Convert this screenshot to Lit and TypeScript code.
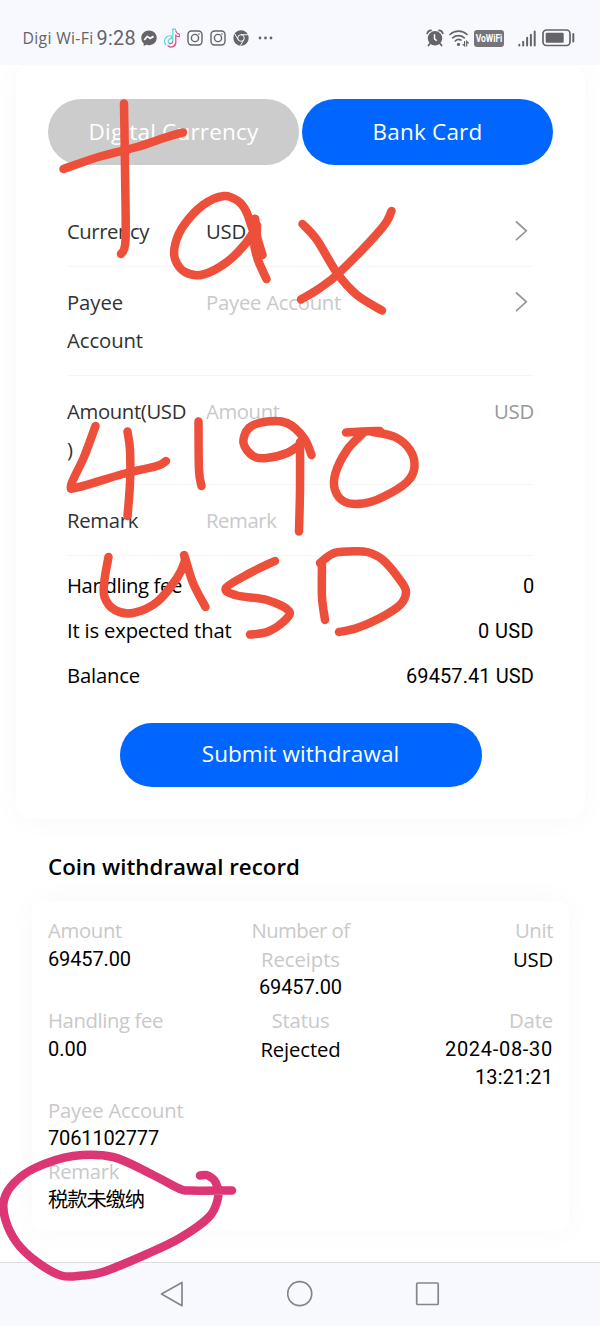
import { LitElement, html, css, svg } from "lit";
import { customElement, property } from "lit/decorators.js";

type Pt = [number, number];

/** Smooth curve running through every point of a pen stroke. */
function smooth(p: Pt[]): string {
  let d = `M${p[0][0]} ${p[0][1]}`;
  for (let i = 0; i < p.length - 1; i++) {
    const a = p[Math.max(0, i - 1)], b = p[i], c = p[i + 1], e = p[Math.min(p.length - 1, i + 2)];
    d += `C${b[0] + (c[0] - a[0]) / 6} ${b[1] + (c[1] - a[1]) / 6} ${c[0] - (e[0] - b[0]) / 6} ${c[1] - (e[1] - b[1]) / 6} ${c[0]} ${c[1]}`;
  }
  return d;
}

const RED: Pt[][] = [
  [[124, 103.5], [125, 170], [125.5, 240], [121, 254]],
  [[63.5, 169], [100, 156.5], [137, 147], [167, 137], [183, 132.5]],
  [[252, 228], [246, 211], [238, 201], [224, 196], [203, 205], [184, 225], [175.5, 243], [175, 259], [185, 272], [203, 274.5], [227, 262], [246, 243], [255, 228], [255, 219], [257, 236], [262.5, 255]],
  [[255, 219], [254, 243], [258, 260], [266.5, 279]],
  [[257, 225], [257, 243], [261, 255]],
  [[302.5, 224], [317, 240], [337, 273], [357, 295], [382, 310.5]],
  [[391.5, 211], [382, 228], [340, 272], [320, 288], [301, 299.5]],
  [[95.5, 426], [84, 457], [71, 485.5], [79, 487], [123, 474], [157, 466], [166, 461]],
  [[127.5, 431.5], [130, 450], [130, 483], [127.5, 516]],
  [[198.5, 421.5], [199, 470], [201.5, 486]],
  [[302, 443], [287, 453], [266.5, 458], [253, 456], [243.5, 443], [249, 428], [267, 421.5], [287, 423], [304, 438], [311.5, 455]],
  [[300, 442], [300, 490], [299, 531.5]],
  [[346, 432.5], [363, 431.5], [380, 431]],
  [[363, 433], [347, 450], [335.5, 473], [335, 490], [345, 502], [363, 503.5], [383, 497], [407, 482], [414.5, 467], [410, 450], [395, 437], [373, 432]],
  [[108.5, 557], [104.5, 580], [104.5, 597], [115, 610], [133, 613], [157, 602], [177, 578], [184.5, 562], [184.5, 556], [193, 583], [205.5, 607]],
  [[275, 561], [250, 573], [226, 588], [237, 595.5], [267, 600], [289, 611], [283, 622], [267, 632], [250, 634.5]],
  [[322, 565], [322, 597], [325, 620]],
  [[320, 563], [333, 553.5], [350, 551.5], [367, 552], [383, 560], [400, 580], [406, 592], [400, 605], [380, 618], [357, 628], [339, 632]],
];
const PINK: Pt[] = [[200, 1175.5], [208, 1175.5], [216, 1183], [218, 1198], [209, 1217], [180, 1238], [147, 1254], [103, 1272], [82, 1275.5], [61, 1275.5], [37, 1262], [17, 1243], [5.5, 1220], [4, 1200], [14, 1183], [35, 1168], [73, 1156], [113, 1157], [153, 1175], [179, 1188.5], [190, 1190.5], [232, 1190.5]];

/** One line of text tracked out or in to fill a given width. */
@customElement("fit-text")
class FitText extends LitElement {
  @property() text = "";
  @property({ type: Number }) w = 0;
  static styles = css`
    :host { display: block; white-space: pre; flex: none; }
  `;
  render() {
    return html`<span>${this.text}</span>`;
  }
  async firstUpdated() {
    await document.fonts.ready;
    const s = this.renderRoot.querySelector("span")!;
    const n = [...this.text].length;
    if (this.w) s.style.letterSpacing = `${(this.w - s.getBoundingClientRect().width) / n}px`;
  }
}

const t = (text: string, w: number, cls = "") => html`<fit-text class=${cls} .text=${text} .w=${w}></fit-text>`;

@customElement("app-root")
class AppRoot extends LitElement {
  static styles = css`
    :host { display: block; }
    * { box-sizing: border-box; }
    .screen { position: relative; width: 600px; height: 1326px; overflow: hidden; display: flex; flex-direction: column;
      background: #fff; color: #000; font: 400 20.3px/28.7px "Open Sans", "Noto Sans CJK SC", sans-serif; }
    svg { display: block; flex: none; }
    .status { height: 65px; flex: none; background: #f8f8ff; color: #646469; display: flex; align-items: center; padding: 11px 25px 0 22.5px; z-index: 1; }
    .carrier { font: 400 15.8px/20px "Open Sans", sans-serif; }
    .clock { font: 400 19.8px/20px Roboto, sans-serif; margin: 1px 0 0 3px; }
    .apps { display: flex; align-items: center; gap: 7px; margin: 0 0 0 5px; flex: 1; }
    .sys { display: flex; align-items: center; }
    .wifi { margin-left: 5px; }
    .vowifi { margin: 0 14px 0 5px; width: 30px; height: 17px; border-radius: 3px; background: #757579; color: #fff;
      font: 700 8.5px/17px Roboto, sans-serif; display: flex; justify-content: center; }
    .tall { transform: scaleY(1.35); }
    .battery { margin-left: 6px; }
    .body { flex: 1; min-height: 0; padding: 1px 15px 0 16px; overflow: hidden; }
    .card { height: 753px; border-radius: 16px; background: #fff; box-shadow: 0 0 32px rgba(0,0,0,.03); padding: 33px 32px 0; }
    .tabs { display: flex; gap: 3px; height: 66px; color: #fff; font-size: 22.5px; }
    .tab { flex: 1; border-radius: 33px; background: #ccc; display: flex; align-items: center; justify-content: center; }
    .tab.on, .submit { background: #06f; color: #fff; }
    .form { margin: 31px 19px 0; line-height: 38.6px; color: #323233; }
    .row { display: flex; padding: 16px 0 15px; border-bottom: 1px solid #f6f6f7; }
    .label { width: 139px; }
    .value { flex: 1; }
    .ph { color: #c8c9cc; }
    .chev { margin: 8px 5px 0 0; }
    .unit { color: #969799; }
    .num { font-family: Roboto, sans-serif; font-size: 20px; }
    .fees { margin: 7.5px 19px 0; line-height: 45px; }
    .fee { display: flex; justify-content: space-between; }
    .fee .num { line-height: 46px; height: 45px; }
    .submit { margin: 25px auto 0; width: 362px; height: 64px; border-radius: 32px; font-size: 22.5px; display: flex; align-items: center; justify-content: center; padding-bottom: 1px; }
    .title { font-size: 22.3px; font-weight: 600; line-height: 30px; padding: 33px 0 1px 32px; }
    .record { margin: 18px 16px 0; height: 330px; border-radius: 12px; background: #fff; box-shadow: 0 0 32px rgba(0,0,0,.03); padding: 15px 16px; }
    .grid { display: grid; grid-template-columns: 1fr 1fr 1fr; row-gap: 3.7px; }
    .cell { display: flex; flex-direction: column; }
    .mid { align-items: center; }
    .end { align-items: flex-end; }
    .span { grid-column: 1 / -1; }
    .dim { color: #c9c9c9; }
    .nav { height: 64px; flex: none; background: #f8f8ff; border-top: 1px solid #dedee2; display: flex; justify-content: center; align-items: center; gap: 102px; padding-bottom: 1px; z-index: 1; }
    .ink { position: absolute; left: 0; top: 0; z-index: 2; pointer-events: none; }
  `;

  private insta() {
    return html`<svg width="16" height="16" viewBox="0 0 16 16" fill="none" stroke="#646469" stroke-width="1.4">
      <rect x="1" y="1" width="14" height="14" rx="3.5" /><circle cx="8" cy="8" r="3.6" /><circle cx="12" cy="4" r=".8" fill="#646469" stroke="none" /></svg>`;
  }
  private chevron() {
    return html`<svg class="chev" width="15" height="21" viewBox="0 0 15 21" fill="none" stroke="#969799" stroke-width="1.7" stroke-linecap="round"><path d="M2.500 2L12.300 10.800 2.500 19.600" /></svg>`;
  }

  render() {
    return html`<div class="screen">
      <div class="status">
        ${t("Digi Wi-Fi", 71, "carrier")}${t("9:28", 39.5, "clock")}
        <div class="apps">
          <svg width="16" height="17" viewBox="0 0 16 17"><path fill="#646469" d="M8 .5C3.6 .5 .3 3.7 .3 8c0 2.200.9 4.100 2.400 5.400v2.500l2.500-1.100c.9.300 1.800.4 2.800.4 4.400 0 7.700-3.200 7.700-7.400S12.400.5 8 .5z" /><path d="M3.300 10l3-3.600 2.700 2 3.600-2" fill="none" stroke="#f8f8ff" stroke-width="1.800" stroke-linejoin="round" /></svg>
          <svg width="16" height="20" viewBox="0 0 16 20" fill="none" stroke-width="1.200">
            <path d="M11.800 6.500V14a4.700 4.700 0 0 1-8.200 3.400" stroke="#e04a75" />
            <path d="M11.900 3c.4 1.900 1.700 3 3.600 3.200v2.500c-1.400 0-2.600-.4-3.600-1" stroke="#d7587d" />
            <path d="M2.300 17A5.300 5.300 0 0 1 7.300 8v2.700a2.900 2.900 0 0 0-2.600 4.500M8.800 13.500V1.200h2.600l.4 1.800" stroke="#59d6d6" />
            <path d="M8.800 13.300a2.300 2.300 0 0 1-3.900 1.700" stroke="#d7587d" />
          </svg>
          ${this.insta()}${this.insta()}
          <svg width="16" height="16" viewBox="0 0 16 16"><circle cx="8" cy="8" r="7.700" fill="#646469" /><g fill="none" stroke="#f8f8ff" stroke-width="1"><circle cx="8" cy="8" r="3.300" /><path d="M8 4.700h6.900M5.200 9.700L1.700 3.700M10.800 9.700L7.400 15.600" /></g></svg>
          <svg width="18" height="16" viewBox="0 0 18 16" fill="#646469"><circle cx="4" cy="8" r="1.400" /><circle cx="9.500" cy="8" r="1.400" /><circle cx="15" cy="8" r="1.400" /></svg>
        </div>
        <div class="sys">
          <svg width="18" height="18" viewBox="0 0 18 18"><g fill="none" stroke="#646469" stroke-width="1.700" stroke-linecap="round"><path d="M1.200 4.500A4 4 0 0 1 5 1.400M16.800 4.500A4 4 0 0 0 13 1.400M4 14.500L2.400 16.600M14 14.500l1.600 2.100" /></g><circle cx="9" cy="9.300" r="7.200" fill="#646469" /><path d="M8.500 5.200v4.600l2.300 2" fill="none" stroke="#fff" stroke-width="1.500" /></svg>
          <svg class="wifi" width="20" height="18" viewBox="0 0 20 18" fill="none" stroke="#646469" stroke-width="1.700" stroke-linecap="round"><path d="M1 5.500a12.500 12.500 0 0 1 17 0M3.700 8.800a8.600 8.600 0 0 1 11.600 0M6.300 12a4.800 4.800 0 0 1 5.600-.9" /><circle cx="9.500" cy="15.400" r="1.600" fill="#646469" stroke="none" /><path stroke-width="1.200" d="M15.600 12.500v4.400l-1.600-1.500M17.700 16.900v-4.400l1.600 1.500" /></svg>
          <div class="vowifi">${t("VoWiFi", 26.5, "tall")}</div>
          <svg width="18" height="17" viewBox="0 0 18 17" stroke="#646469" stroke-width="2" stroke-linecap="round"><path d="M1.300 15.500v-.8M5.200 15.500v-3.800M9.100 15.500V7.800M12.900 15.500V4.800M16.700 15.500V1.500" /></svg>
          <svg class="battery" width="33" height="18" viewBox="0 0 33 18"><rect x="1" y="1" width="27" height="15.500" rx="3.500" fill="none" stroke="#646469" stroke-width="1.700" /><rect x="3.700" y="3.700" width="18" height="10" rx="1" fill="#646469" /><path d="M31.300 5v7.500" stroke="#646469" stroke-width="2" stroke-linecap="round" /></svg>
        </div>
      </div>
      <div class="body">
        <div class="card">
          <div class="tabs">
            <div class="tab">${t("Digital Currency", 170)}</div>
            <div class="tab on">${t("Bank Card", 110)}</div>
          </div>
          <div class="form">
            <div class="row"><div class="label">${t("Currency", 82)}</div><div class="value">${t("USD", 40)}</div>${this.chevron()}</div>
            <div class="row"><div class="label">${t("Payee", 56)}${t("Account", 76)}</div><div class="value ph">${t("Payee Account", 135)}</div>${this.chevron()}</div>
            <div class="row"><div class="label">${t("Amount(USD", 119)}${t(")", 0)}</div><div class="value ph">${t("Amount", 73.5)}</div><div class="unit">${t("USD", 40)}</div></div>
            <div class="row"><div class="label">${t("Remark", 71)}</div><div class="value ph">${t("Remark", 70.5)}</div></div>
          </div>
          <div class="fees">
            <div class="fee">${t("Handling fee", 115)}${t("0", 11, "num")}</div>
            <div class="fee">${t("It is expected that", 164.5)}${t("0 USD", 56, "num")}</div>
            <div class="fee">${t("Balance", 73)}${t("69457.41 USD", 128, "num")}</div>
          </div>
          <div class="submit">${t("Submit withdrawal", 197.5)}</div>
        </div>
        <div class="title">${t("Coin withdrawal record", 252)}</div>
        <div class="record"><div class="grid">
          <div class="cell">${t("Amount", 74, "dim")}${t("69457.00", 83, "num")}</div>
          <div class="cell mid">${t("Number of", 98, "dim")}${t("Receipts", 79, "dim")}${t("69457.00", 83, "num")}</div>
          <div class="cell end">${t("Unit", 38, "dim")}${t("USD", 40)}</div>
          <div class="cell">${t("Handling fee", 115, "dim")}${t("0.00", 39, "num")}</div>
          <div class="cell mid">${t("Status", 58, "dim")}${t("Rejected", 80)}</div>
          <div class="cell end">${t("Date", 44, "dim")}${t("2024-08-30", 108, "num")}${t("13:21:21", 78, "num")}</div>
          <div class="cell span">${t("Payee Account", 135.5, "dim")}${t("7061102777", 111, "num")}</div>
          <div class="cell span">${t("Remark", 71, "dim")}${t("税款未缴纳", 96)}</div>
        </div></div>
      </div>
      <div class="nav">
        <svg width="26" height="28" viewBox="0 0 26 28" fill="none" stroke="#85858b" stroke-width="1.700" stroke-linejoin="round"><path d="M23 2.500v23.200L2.500 14z" /></svg>
        <svg width="26" height="28" viewBox="0 0 26 28" fill="none" stroke="#85858b" stroke-width="1.700"><circle cx="12.700" cy="13.700" r="12" /></svg>
        <svg width="26" height="28" viewBox="0 0 26 28" fill="none" stroke="#85858b" stroke-width="1.700"><rect x="1.700" y="3" width="21.500" height="21.500" rx="1" /></svg>
      </div>
      <svg class="ink" width="600" height="1326" viewBox="0 0 600 1326" fill="none" stroke-linecap="round" stroke-linejoin="round">
        ${RED.map((s) => svg`<path d=${smooth(s)} stroke="#ed4f3a" stroke-width="8.500" />`)}
        <path d=${smooth(PINK)} stroke="#dc3675" stroke-width="8.500" />
      </svg>
    </div>`;
  }
}
